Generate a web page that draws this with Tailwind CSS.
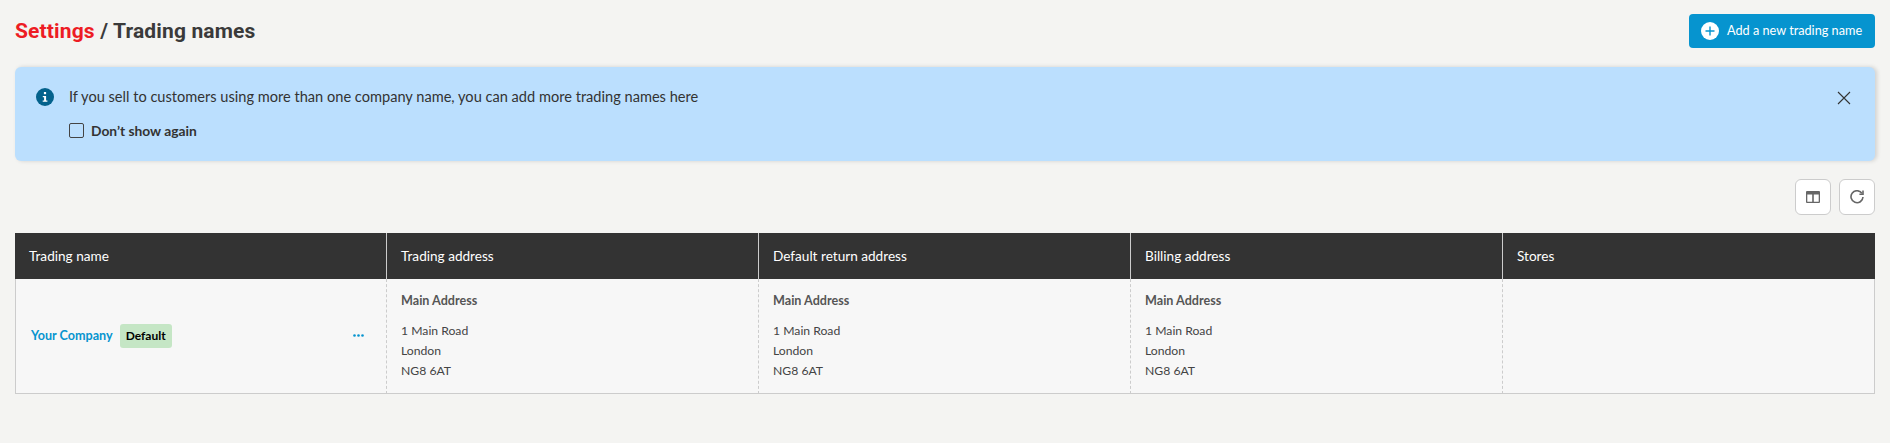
<!DOCTYPE html>
<html lang="en">
<head>
    <meta charset="UTF-8">
    <meta name="viewport" content="width=device-width, initial-scale=1.0">
    <title>Trading names</title>
    <script src="https://cdn.jsdelivr.net/npm/@tailwindcss/browser@4"></script>
</head>
<body class="bg-[#f4f4f2] font-['Lato',sans-serif] text-[#333] min-h-screen overflow-hidden">
    <div class="pl-[15px] pr-[15px]">
        <!-- Page header -->
        <div class="flex items-center justify-between pt-[14px] h-[67px] pb-[19px]">
            <h1 class="font-['Roboto',sans-serif] font-bold text-[21px] leading-[34px] tracking-[0.15px] text-[#3a3a3a]">
                <a href="#" class="text-[#ed1c24]">Settings</a> / Trading names
            </h1>
            <button class="flex items-center gap-[8px] h-[34px] w-[186px] pl-[12px] bg-[#0694cf] rounded-[4px] text-white text-[12.7px] whitespace-nowrap">
                <svg class="w-[18px] h-[18px]" viewBox="0 0 18 18">
                    <circle cx="9" cy="9" r="9" fill="#fff"/>
                    <path d="M9 4.5v9M4.5 9h9" stroke="#0694cf" stroke-width="1.4"/>
                </svg>
                Add a new trading name
            </button>
        </div>

        <!-- Info banner -->
        <div class="flex justify-between bg-[#bbdffe] rounded-[6px] h-[94px] shadow-[2px_0_4px_rgba(0,0,0,0.15)] pl-[21px] pr-[24px]">
            <div class="flex gap-[15px] pt-[20px]">
                <svg class="w-[18px] h-[18px] mt-[1px]" viewBox="0 0 18 18">
                    <circle cx="9" cy="9" r="9" fill="#04628c"/>
                    <rect x="7.9" y="4" width="2.2" height="2.2" fill="#fff"/>
                    <path d="M6.8 8h3.3v4.6h1.3v1.2H6.7v-1.2h1.4V9.2H6.8z" fill="#fff"/>
                </svg>
                <div>
                    <p class="text-[14.6px] leading-[20px]">If you sell to customers using more than one company name, you can add more trading names here</p>
                    <label class="flex items-center gap-[7px] mt-[16px] text-[13.8px] font-bold leading-[14px]">
                        <span class="w-[15px] h-[15px] border border-[#444] rounded-[2px]"></span>
                        Don’t show again
                    </label>
                </div>
            </div>
            <button class="self-start mt-[24px]" aria-label="Close">
                <svg class="w-[14px] h-[14px] block" viewBox="0 0 14 14" fill="none" stroke="#333" stroke-width="1.1">
                    <path d="M1 1l12 12M13 1L1 13"/>
                </svg>
            </button>
        </div>

        <!-- Table tools -->
        <div class="flex justify-end gap-[8px] pt-[18px] pb-[18px]">
            <button class="flex items-center justify-center w-[36px] h-[36px] bg-white border border-[#ccc] rounded-[6px]" aria-label="Columns">
                <svg class="w-[14px] h-[12px]" viewBox="0 0 14 12">
                    <path fill-rule="evenodd" d="M0 1a1 1 0 0 1 1-1h12a1 1 0 0 1 1 1v10a1 1 0 0 1-1 1H1a1 1 0 0 1-1-1zM1.3 3.4v7.3h4.9V3.4zM7.8 3.4v7.3h4.9V3.4z" fill="#666"/>
                </svg>
            </button>
            <button class="flex items-center justify-center w-[36px] h-[36px] bg-white border border-[#ccc] rounded-[6px]" aria-label="Refresh">
                <svg class="w-[14px] h-[14px]" viewBox="0 0 14 14" fill="none" stroke="#666" stroke-width="1.6">
                    <path d="M12 3.4A6 6 0 1 0 13 7"/>
                    <path d="M13 .6v3.6H9.4" />
                </svg>
            </button>
        </div>

        <!-- Trading names table -->
        <table class="w-[1860px] table-fixed border-separate border-spacing-0 text-[13.6px]">
            <colgroup>
                <col class="w-[371px]"><col class="w-[372px]"><col class="w-[372px]"><col class="w-[372px]"><col>
            </colgroup>
            <thead>
                <tr class="bg-[#333] text-white h-[46px] text-left">
                    <th class="font-normal pl-[14px]">Trading name</th>
                    <th class="font-normal pl-[14px] border-l border-[#ccc]">Trading address</th>
                    <th class="font-normal pl-[14px] border-l border-[#ccc]">Default return address</th>
                    <th class="font-normal pl-[14px] border-l border-[#ccc]">Billing address</th>
                    <th class="font-normal pl-[14px] border-l border-[#ccc]">Stores</th>
                </tr>
            </thead>
            <tbody>
                <tr class="bg-[#f7f7f7] h-[115px] align-top text-[12.2px] text-[#444]">
                    <td class="align-middle pl-[15px] pr-[22px] border-l border-b border-[#ccc]">
                        <div class="flex items-center">
                            <a href="#" class="text-[#0694cf] font-bold text-[12.6px]">Your Company</a>
                            <span class="ml-[7px] px-[6px] h-[24px] leading-[24px] bg-[#c5e6c5] rounded-[3px] text-black font-bold text-[12px]">Default</span>
                            <svg class="ml-auto w-[11px] h-[3px] -translate-y-[1px]" viewBox="0 0 11 3" fill="#0694cf">
                                <circle cx="1.5" cy="1.5" r="1.3"/><circle cx="5.5" cy="1.5" r="1.3"/><circle cx="9.5" cy="1.5" r="1.3"/>
                            </svg>
                        </div>
                    </td>
                    <td class="pl-[14px] border-l border-b border-[#ccc] [border-left-style:dashed]">
                        <p class="font-bold mt-[12px] mb-[10px] leading-[20px] text-[#555] text-[12.6px]">Main Address</p>
                        <p class="leading-[20px]">1 Main Road<br>London<br>NG8 6AT</p>
                    </td>
                    <td class="pl-[14px] border-l border-b border-[#ccc] [border-left-style:dashed]">
                        <p class="font-bold mt-[12px] mb-[10px] leading-[20px] text-[#555] text-[12.6px]">Main Address</p>
                        <p class="leading-[20px]">1 Main Road<br>London<br>NG8 6AT</p>
                    </td>
                    <td class="pl-[14px] border-l border-b border-[#ccc] [border-left-style:dashed]">
                        <p class="font-bold mt-[12px] mb-[10px] leading-[20px] text-[#555] text-[12.6px]">Main Address</p>
                        <p class="leading-[20px]">1 Main Road<br>London<br>NG8 6AT</p>
                    </td>
                    <td class="border-l border-r border-b border-[#ccc] [border-left-style:dashed]"></td>
                </tr>
            </tbody>
        </table>
    </div>
</body>
</html>
